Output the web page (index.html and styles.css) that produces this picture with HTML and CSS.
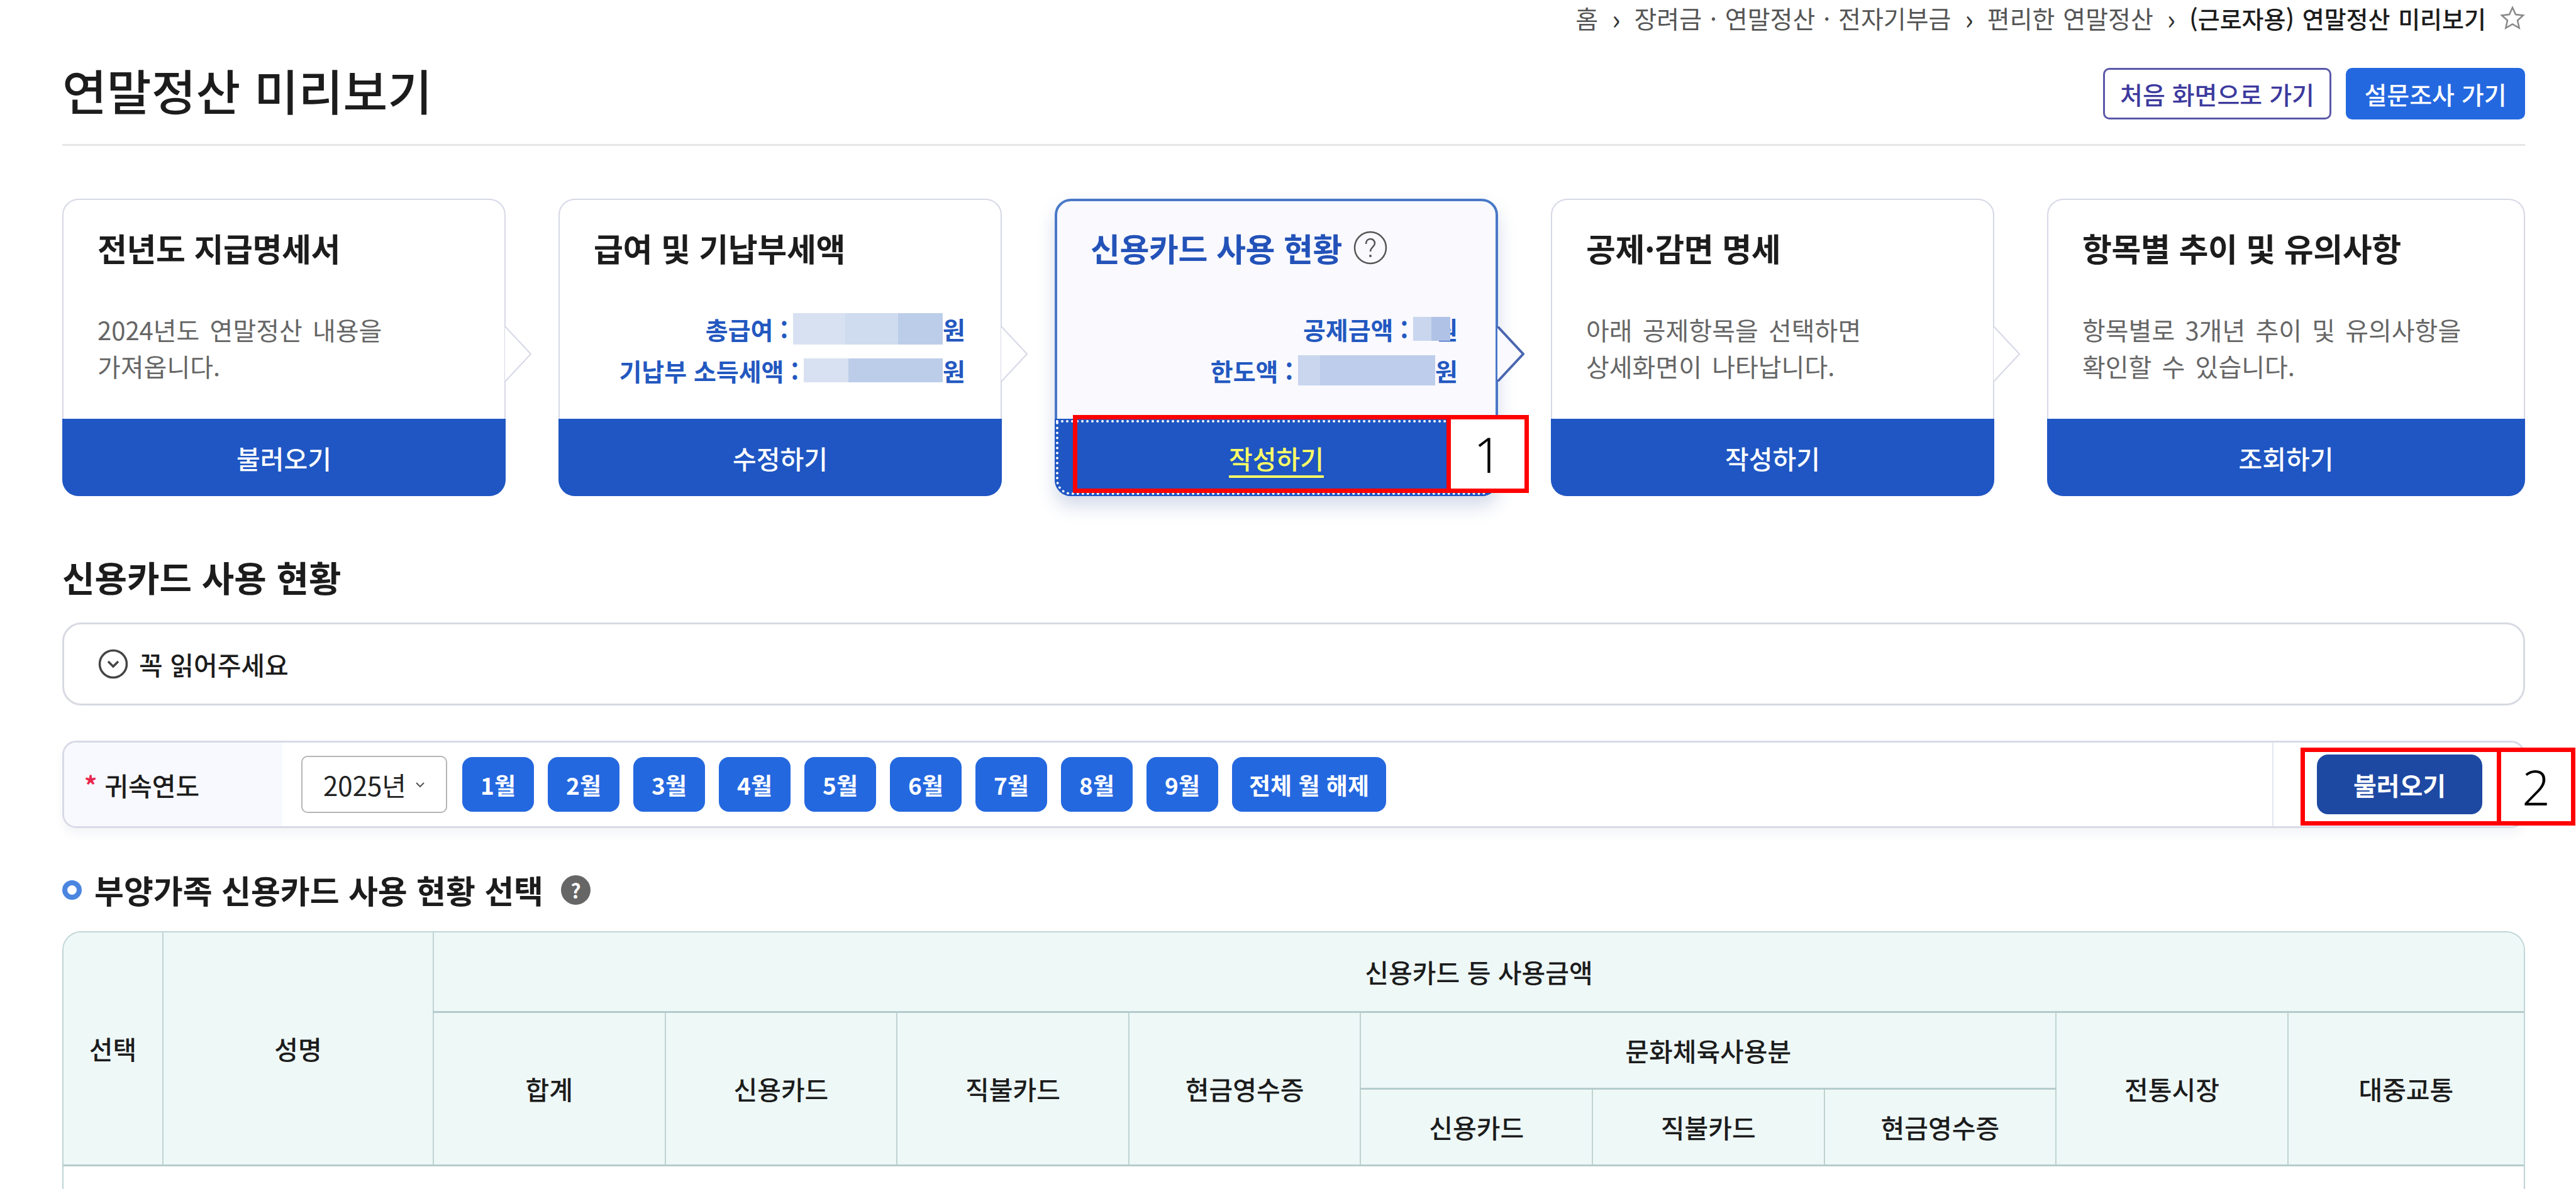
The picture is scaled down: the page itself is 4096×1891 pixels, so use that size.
FILE: index.html
```html
<!DOCTYPE html>
<html lang="ko">
<head>
    <meta charset="UTF-8">
    <meta name="viewport" content="width=device-width, initial-scale=1.0">
    <title>연말정산 미리보기</title>
    <link rel="stylesheet" href="styles.css">
</head>
<body>
    <div class="page">
        <div class="breadcrumb">
            <span>홈</span><span class="sep">›</span>
            <span>장려금 · 연말정산 · 전자기부금</span><span class="sep">›</span>
            <span>편리한 연말정산</span><span class="sep">›</span>
            <strong>(근로자용) 연말정산 미리보기</strong>
            <svg class="star" viewBox="0 0 40 40"><path d="M20 4l5 11 12 1.500-9 8 2.700 12L20 30.500 9.300 36.500 12 24.500l-9-8L15 15z"/></svg>
        </div>

        <div class="head">
            <h1>연말정산 미리보기</h1>
            <div class="head-btns">
                <button class="btn-line">처음 화면으로 가기</button>
                <button class="btn-fill">설문조사 가기</button>
            </div>
        </div>

        <div class="steps">
            <div class="card">
                <div class="card-body">
                    <h2 class="card-title">전년도 지급명세서</h2>
                    <p class="card-desc">2024년도 연말정산 내용을<br>가져옵니다.</p>
                </div>
                <a class="card-btn">불러오기</a>
                <svg class="arrow" viewBox="0 0 44 88"><path d="M1 0L42 44L1 88"/></svg>
            </div>
            <div class="card">
                <div class="card-body">
                    <h2 class="card-title">급여 및 기납부세액</h2>
                    <div class="amounts">
                        <div class="amount">총급여 :<span class="mask mask-a"></span>원</div>
                        <div class="amount">기납부 소득세액 :<span class="mask mask-b"></span>원</div>
                    </div>
                </div>
                <a class="card-btn">수정하기</a>
                <svg class="arrow" viewBox="0 0 44 88"><path d="M1 0L42 44L1 88"/></svg>
            </div>
            <div class="card active">
                <div class="card-body">
                    <h2 class="card-title">신용카드 사용 현황
                        <svg class="help-line" viewBox="0 0 54 54"><circle cx="27" cy="27" r="25"/><path d="M20 21c0-5 3-8 7-8s7 3 7 7c0 6-7 6-7 13"/><circle class="dot" cx="27" cy="40" r="2"/></svg>
                    </h2>
                    <div class="amounts">
                        <div class="amount">공제금액 :<span class="mask mask-c"></span>원</div>
                        <div class="amount">한도액 :<span class="mask mask-d"></span>원</div>
                    </div>
                </div>
                <a class="card-btn">작성하기</a>
                <svg class="arrow" viewBox="0 0 44 88"><path d="M1 0L42 44L1 88"/></svg>
                <div class="note note-one">
                    <div class="note-frame"></div>
                    <div class="note-num">1</div>
                </div>
            </div>
            <div class="card">
                <div class="card-body">
                    <h2 class="card-title">공제·감면 명세</h2>
                    <p class="card-desc">아래 공제항목을 선택하면<br>상세화면이 나타납니다.</p>
                </div>
                <a class="card-btn">작성하기</a>
                <svg class="arrow" viewBox="0 0 44 88"><path d="M1 0L42 44L1 88"/></svg>
            </div>
            <div class="card card-last">
                <div class="card-body">
                    <h2 class="card-title">항목별 추이 및 유의사항</h2>
                    <p class="card-desc">항목별로 3개년 추이 및 유의사항을<br>확인할 수 있습니다.</p>
                </div>
                <a class="card-btn">조회하기</a>
            </div>
        </div>

        <h2 class="section-title">신용카드 사용 현황</h2>

        <div class="notice">
            <svg class="notice-icon" viewBox="0 0 48 48"><circle cx="24" cy="24" r="21.500"/><path d="M16 20l8 8 8-8"/></svg>
            <span>꼭 읽어주세요</span>
        </div>

        <div class="filter">
            <div class="filter-label"><span class="req">*</span>귀속연도</div>
            <div class="filter-main">
                <div class="select">2025년
                    <svg viewBox="0 0 16 10"><path d="M2 2l6 6 6-6"/></svg>
                </div>
                <button class="month">1월</button>
                <button class="month">2월</button>
                <button class="month">3월</button>
                <button class="month">4월</button>
                <button class="month">5월</button>
                <button class="month">6월</button>
                <button class="month">7월</button>
                <button class="month">8월</button>
                <button class="month">9월</button>
                <button class="month month-all">전체 월 해제</button>
            </div>
            <div class="filter-side">
                <button class="btn-load">불러오기</button>
            </div>
            <div class="note note-two">
                <div class="note-frame"></div>
                <div class="note-num">2</div>
            </div>
        </div>

        <div class="sub-title">
            <span class="ring"></span>
            <span>부양가족 신용카드 사용 현황 선택</span>
            <span class="help-fill">?</span>
        </div>

        <div class="table-wrap">
            <table>
                <colgroup>
                    <col class="col-check"><col class="col-name">
                    <col class="col-amt"><col class="col-amt"><col class="col-amt"><col class="col-amt"><col class="col-amt"><col class="col-amt"><col class="col-amt"><col class="col-amt"><col>
                </colgroup>
                <thead>
                    <tr class="row-top">
                        <th rowspan="3">선택</th>
                        <th rowspan="3">성명</th>
                        <th colspan="9">신용카드 등 사용금액</th>
                    </tr>
                    <tr class="row-mid">
                        <th rowspan="2">합계</th>
                        <th rowspan="2">신용카드</th>
                        <th rowspan="2">직불카드</th>
                        <th rowspan="2">현금영수증</th>
                        <th colspan="3">문화체육사용분</th>
                        <th rowspan="2">전통시장</th>
                        <th rowspan="2">대중교통</th>
                    </tr>
                    <tr class="row-low">
                        <th>신용카드</th>
                        <th>직불카드</th>
                        <th>현금영수증</th>
                    </tr>
                </thead>
            </table>
        </div>
    </div>
</body>
</html>
```

FILE: styles.css
```css
* {
    box-sizing: border-box;
}
html, body {
    margin: 0;
    height: 100%;
    overflow: hidden;
    background-color: #fff;
}
body {
    font-family: "Noto Sans CJK KR", "Noto Sans", sans-serif;
    color: #1c1c1c;
}
h1, h2, p {
    margin: 0;
}
button {
    font-family: inherit;
    border: none;
    cursor: pointer;
}
.page {
    width: 3916px;
    height: 100vh;
    margin-left: 99px;
    display: flex;
    flex-direction: column;
}

/* breadcrumb */
.breadcrumb {
    height: 64px;
    padding-bottom: 8px;
    flex: none;
    display: flex;
    justify-content: flex-end;
    align-items: center;
    gap: 6px;
    font-size: 39px;
    word-spacing: 2px;
    color: #555;
    white-space: pre;
}
.breadcrumb strong {
    color: #1c1c1c;
    font-size: 38px;
    font-weight: 500;
}
.breadcrumb .sep {
    margin: 0 16px;
    font-size: 44px;
    color: #333;
}
.star {
    width: 40px;
    height: 40px;
    margin-left: 16px;
    fill: none;
    stroke: #888;
    stroke-width: 2.5;
}

/* page head */
.head {
    height: 168px;
    flex: none;
    display: flex;
    justify-content: space-between;
    align-items: flex-start;
    border-bottom: 3px solid #e6e6e6;
}
.head h1 {
    font-size: 77px;
    font-weight: 500;
    line-height: 106px;
    margin-top: 26px;
}
.head-btns {
    display: flex;
    gap: 23px;
    margin-top: 44px;
}
.head-btns button {
    height: 82px;
    border-radius: 10px;
    font-size: 39px;
    font-weight: 500;
}
.btn-line {
    width: 363px;
    background-color: #fff;
    border: 3px solid #5a58a8;
    color: #3d3a9e;
}
.btn-fill {
    width: 285px;
    background-color: #2468e0;
    color: #fff;
}

/* step cards */
.steps {
    display: flex;
    flex: none;
    gap: 84px;
    margin-top: 84px;
}
.card {
    position: relative;
    width: 705px;
    height: 473px;
    display: flex;
    flex-direction: column;
    background-color: #fff;
    border: 2px solid #d6d8e6;
    border-radius: 26px;
}
.card-last {
    flex: 1;
}
.card-body {
    flex: 1;
    padding: 46px 56px 0 54px;
}
.card-title {
    display: flex;
    align-items: center;
    gap: 18px;
    height: 60px;
    font-size: 51px;
    font-weight: 700;
    letter-spacing: -0.4px;
}
.card-desc {
    margin-top: 71px;
    font-size: 40px;
    word-spacing: 5px;
    line-height: 58px;
    color: #666;
}
.amounts {
    margin-top: 66px;
}
.amount {
    height: 66px;
    display: flex;
    justify-content: flex-end;
    align-items: center;
    font-size: 39px;
    font-weight: 700;
    color: #2358c0;
}
.mask {
    position: relative;
    display: block;
}
.mask-a {
    width: 238px;
    height: 50px;
    margin-left: 8px;
    background: linear-gradient(90deg, #d8e1f1 35%, #cfdbee 35% 70%, #bccde9 70%);
}
.mask-b {
    width: 221px;
    height: 38px;
    margin-left: 8px;
    background: linear-gradient(90deg, #d8e1f1 32%, #bccde9 32%);
}
.mask-c {
    width: 59px;
    height: 38px;
    margin: 0 -24px 0 8px;
    background: linear-gradient(90deg, #c9d6ee 50%, #b0c3e6 50%);
}
.mask-d {
    width: 218px;
    height: 48px;
    margin-left: 8px;
    background: linear-gradient(90deg, #c9d6ee 16%, #bdcdeb 16%);
}
.card-btn {
    height: 123px;
    margin: 0 -2px -2px;
    display: flex;
    justify-content: center;
    align-items: center;
    background-color: #1f56c3;
    border-radius: 0 0 26px 26px;
    color: #fff;
    font-size: 41px;
    font-weight: 500;
}
.arrow {
    position: absolute;
    top: 201px;
    right: -44px;
    width: 44px;
    height: 88px;
    fill: #fff;
    stroke: #d6d8e6;
    stroke-width: 2;
}

/* current step */
.active {
    background-color: #f9f9fe;
    border: 4px solid #4a78c8;
    box-shadow: 0 16px 28px rgba(60, 90, 160, 0.22);
}
.active .card-body {
    padding: 44px 60px 0 53px;
}
.active .card-title {
    color: #2352b8;
}
.active .card-btn {
    margin: 0 -4px -4px;
    color: #ffff66;
    text-decoration: underline;
    text-underline-offset: 10px;
    outline: 4px dotted #fff;
    outline-offset: -6px;
}
.active .arrow {
    top: 199px;
    right: -46px;
    fill: #f9f9fe;
    stroke: #4a66b0;
    stroke-width: 4;
}
.help-line {
    width: 54px;
    height: 54px;
    fill: none;
    stroke: #555;
    stroke-width: 2.500;
}
.help-line .dot {
    fill: #555;
    stroke: none;
}

/* red annotation boxes */
.note {
    position: absolute;
    display: flex;
}
.note-frame {
    border: 7px solid #ff0000;
}
.note-num {
    margin-left: -7px;
    display: flex;
    justify-content: center;
    align-items: center;
    background-color: #fff;
    border: 7px solid #ff0000;
    color: #000;
    font-family: "Noto Sans", sans-serif;
    font-weight: 300;
    font-size: 78px;
    line-height: 1;
}
.note-one {
    left: 25px;
    top: 340px;
    height: 124px;
}
.note-one .note-frame {
    width: 601px;
}
.note-one .note-num {
    width: 131px;
}
.note-two {
    left: 3556px;
    top: 8px;
    height: 124px;
}
.note-two .note-frame {
    width: 319px;
}
.note-two .note-num {
    width: 125px;
}

/* section */
.section-title {
    margin-top: 92px;
    height: 72px;
    flex: none;
    line-height: 72px;
    font-size: 56px;
    font-weight: 700;
}
.notice {
    margin-top: 37px;
    height: 132px;
    flex: none;
    display: flex;
    align-items: center;
    gap: 17px;
    padding-left: 54px;
    border: 3px solid #d8dae2;
    border-radius: 30px;
    font-size: 41px;
    font-weight: 500;
}
.notice-icon {
    width: 48px;
    height: 48px;
    fill: none;
    stroke: #444;
    stroke-width: 3.500;
}

/* filter row */
.filter {
    position: relative;
    margin-top: 56px;
    height: 139px;
    flex: none;
    display: flex;
    border: 3px solid #d8dae6;
    border-radius: 22px;
    box-shadow: 0 10px 14px rgba(120, 130, 160, 0.08);
}
.filter-label {
    width: 347px;
    display: flex;
    align-items: center;
    gap: 12px;
    padding-left: 32px;
    background-color: #f8f9fe;
    border-radius: 20px 0 0 20px;
    font-size: 41px;
    font-weight: 500;
}
.req {
    color: #e8264e;
    font-size: 40px;
    font-weight: 700;
}
.filter-main {
    flex: 1;
    display: flex;
    align-items: center;
    gap: 22px;
    padding-left: 30px;
}
.select {
    width: 232px;
    height: 91px;
    flex: none;
    display: flex;
    align-items: center;
    justify-content: center;
    gap: 14px;
    margin-right: 2px;
    border: 2px solid #b5b5b5;
    border-radius: 10px;
    font-size: 42px;
    color: #222;
}
.select svg {
    width: 16px;
    height: 10px;
    fill: none;
    stroke: #555;
    stroke-width: 2;
}
.month {
    width: 114px;
    height: 87px;
    background-color: #2468e0;
    border-radius: 16px;
    color: #fff;
    font-size: 37px;
    font-weight: 700;
}
.month-all {
    width: 245px;
}
.filter-side {
    width: 399px;
    display: flex;
    align-items: center;
    padding-left: 69px;
    border-left: 2px solid #e4e6f0;
}
.btn-load {
    width: 263px;
    height: 95px;
    background-color: #1e49a3;
    border-radius: 18px;
    color: #fff;
    font-size: 40px;
    font-weight: 700;
}

/* sub heading */
.sub-title {
    margin-top: 68px;
    height: 60px;
    flex: none;
    display: flex;
    align-items: center;
    font-size: 51px;
    font-weight: 700;
}
.ring {
    width: 31px;
    height: 31px;
    margin-right: 20px;
    border: 8px solid #4a86e0;
    border-radius: 50%;
}
.help-fill {
    width: 47px;
    height: 47px;
    margin-left: 28px;
    display: flex;
    justify-content: center;
    align-items: center;
    background-color: #666;
    border-radius: 50%;
    color: #fff;
    font-size: 32px;
    font-weight: 700;
}

/* table */
.table-wrap {
    margin-top: 36px;
    flex: 1;
    border: 2px solid #c0d5d5;
    border-bottom: none;
    border-radius: 30px 30px 0 0;
    overflow: hidden;
}
table {
    width: 100%;
    table-layout: fixed;
    border-collapse: collapse;
}
.col-check {
    width: 158px;
}
.col-name {
    width: 430px;
}
.col-amt {
    width: 368.6px;
}
th {
    background-color: #eef8f7;
    border: 2px solid #bfd3d3;
    border-top: none;
    font-size: 41px;
    font-weight: 500;
    color: #1c1c1c;
    padding: 0;
}
th:first-child {
    border-left: none;
}
th:last-child {
    border-right: none;
}
.row-top {
    height: 126px;
}
.row-mid {
    height: 122px;
}
.row-low {
    height: 122px;
}
.row-top th, .row-mid th, .row-low th {
    border-bottom: 3px solid #b5cccc;
}
```
